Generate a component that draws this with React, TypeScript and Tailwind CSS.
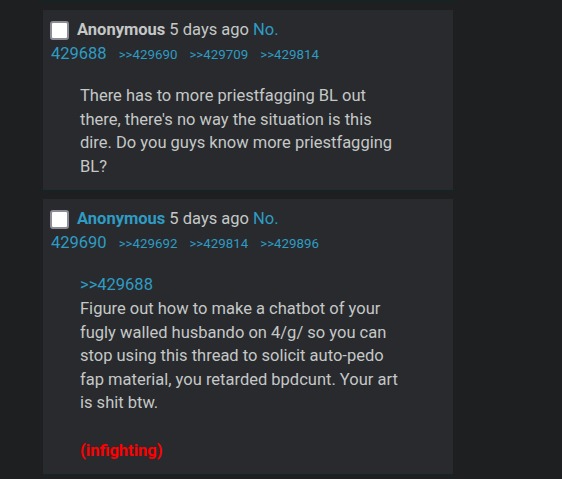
const FONT = { fontFamily: 'Roboto, "Noto Sans", sans-serif' }

interface Post {
  no: string
  name: string
  nameYou?: boolean
  replies: string[]
  quote?: string
  lines: string[]
  tag?: string
}

const POSTS: Post[] = [
  {
    no: '429688',
    name: 'Anonymous',
    replies: ['429690', '429709', '429814'],
    lines: [
      "There has to more priestfagging BL out there, there's no way the situation is this dire. Do you guys know more priestfagging BL?",
    ],
  },
  {
    no: '429690',
    name: 'Anonymous',
    nameYou: true,
    replies: ['429692', '429814', '429896'],
    quote: '429688',
    lines: [
      'Figure out how to make a chatbot of your fugly walled husbando on 4/g/ so you can stop using this thread to solicit auto-pedo fap material, you retarded bpdcunt. Your art is shit btw.',
    ],
    tag: '(infighting)',
  },
]

function Checkbox() {
  return (
    <span className="inline-block w-[19px] h-[19px] rounded-[3px] bg-white border-2 border-[#8d8c96] shrink-0" />
  )
}

function PostCard({ post }: { post: Post }) {
  return (
    <div className="w-[410px] ml-[43px] bg-[#282a2e] border-b-2 border-[#172323] pt-[8px] pb-[12px] pl-[8px]">
      <div className="text-[16.5px] leading-[24px]">
        <div className="flex items-center gap-[8px] -ml-[1px]">
          <Checkbox />
          <span className="text-[#c5c8c6]">
            <span className={post.nameYou ? 'font-bold text-[#2f9cc3]' : 'font-bold text-[#c5c8c6]'}>{post.name}</span>{' '}
            5 days ago <span className="text-[#2f9cc3]">No.</span>
          </span>
        </div>
        <div className="text-[#2f9cc3] flex items-baseline">
          <span>{post.no}</span>
          {post.replies.map((r) => (
            <span key={r} className="text-[13.3px] ml-[12px]">&gt;&gt;{r}</span>
          ))}
        </div>
      </div>
      <div className="mt-[17px] ml-[29px] w-[326px] text-[16.5px] leading-[23.6px] text-[#c5c8c6]">
        {post.quote && <div className="text-[#2f9cc3]">&gt;&gt;{post.quote}</div>}
        {post.lines.map((l, i) => (
          <p key={i}>{l}</p>
        ))}
        {post.tag && (
          <>
            <br />
            <p className="font-bold text-[#f00]">{post.tag}</p>
          </>
        )}
      </div>
    </div>
  )
}

export default function App() {
  return (
    <div className="w-[562px] h-[479px] bg-[#1d1f21] overflow-hidden" style={FONT}>
      <div className="w-[410px] ml-[43px] h-[2px] bg-[#172323]" />
      <div className="flex flex-col gap-[7px] pt-[8px]">
        {POSTS.map((p) => (
          <PostCard key={p.no} post={p} />
        ))}
      </div>
    </div>
  )
}
